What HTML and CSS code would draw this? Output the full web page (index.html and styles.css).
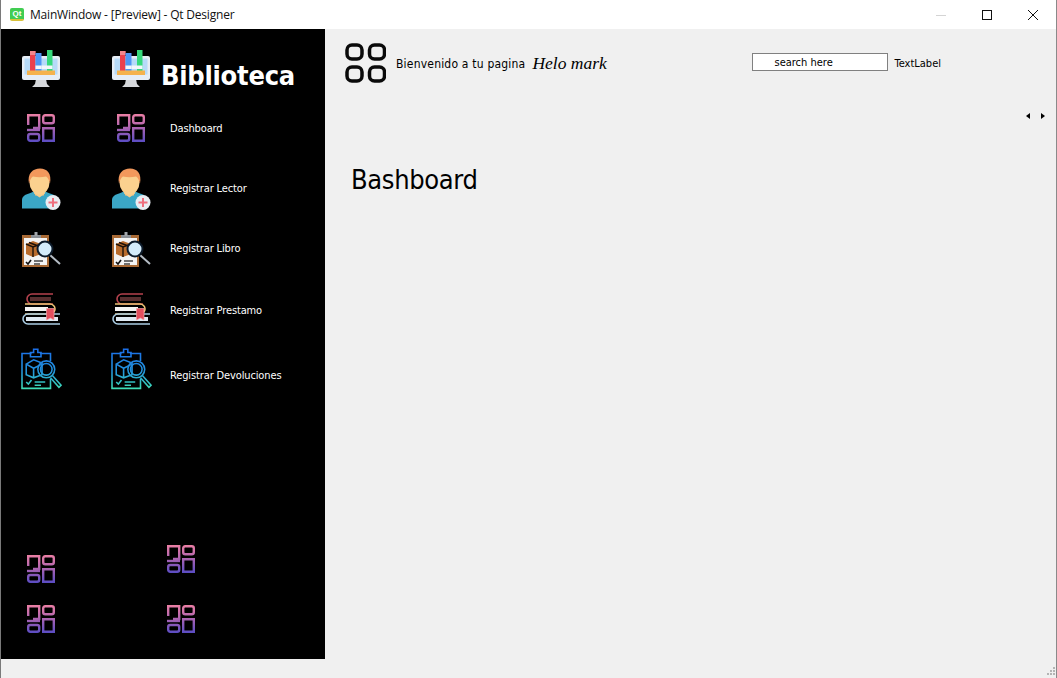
FILE: index.html
```html
<!DOCTYPE html>
<html lang="es">
<head>
<meta charset="utf-8">
<title>MainWindow - [Preview] - Qt Designer</title>
<link rel="stylesheet" href="styles.css">
</head>
<body>
<svg class="defs" aria-hidden="true">
  <defs>
    <linearGradient id="dashGrad" gradientUnits="userSpaceOnUse" x1="0" y1="0" x2="0" y2="28">
      <stop offset="0" stop-color="#ec7fa4"/>
      <stop offset="0.45" stop-color="#b065b0"/>
      <stop offset="1" stop-color="#5a4cc4"/>
    </linearGradient>
    <linearGradient id="tealGrad" gradientUnits="userSpaceOnUse" x1="0" y1="0" x2="0" y2="38">
      <stop offset="0" stop-color="#1b6fe8"/>
      <stop offset="0.55" stop-color="#2394dc"/>
      <stop offset="1" stop-color="#3fe0b4"/>
    </linearGradient>
    <symbol id="i-monitor" viewBox="0 0 38 38">
      <path d="M14 29h10l1 5 3 3H10l3-3z" fill="#d6d8dc"/>
      <rect x="0" y="6" width="38" height="24" rx="2" fill="#e6edf5"/>
      <rect x="2.500" y="8.500" width="33" height="16" fill="#b6daf8"/>
      <rect x="8" y="1" width="5.500" height="20" fill="#ec3f4c"/>
      <rect x="8" y="1" width="5.500" height="4" fill="#f4868c"/>
      <rect x="13.500" y="3" width="6" height="18" fill="#4f97f4"/>
      <rect x="25" y="0" width="5.500" height="21" fill="#35d97c"/>
      <rect x="13.500" y="15.500" width="6" height="3.500" fill="#f4f7fa"/>
      <rect x="19.500" y="15.500" width="5.500" height="3.500" fill="#f4f7fa"/>
      <rect x="25" y="15.500" width="5.500" height="3.500" fill="#f4f7fa"/>
      <rect x="5" y="20.500" width="28" height="4.500" fill="#f5b24c"/>
    </symbol>
    <symbol id="i-dash" viewBox="0 0 28 28">
      <g fill="none" stroke="url(#dashGrad)" stroke-width="2.400">
        <path d="M1.200 11V1.200h11V14H6"/>
        <rect x="16.200" y="1.200" width="10.600" height="8" rx="2"/>
        <path d="M0 16h13"/>
        <rect x="1.200" y="20" width="11" height="6.800" rx="2"/>
        <path d="M16.200 14.200h10.600v12.600H16.200z"/>
      </g>
    </symbol>
    <symbol id="i-person" viewBox="0 -0.500 38 38">
      <path d="M0 39v-8c0-4 3-6 7-7l5-2h11l5 2c4 1 7 3 7 7v8z" fill="#3ba7c6"/>
      <rect x="13" y="17" width="9" height="9" fill="#f0bb78"/>
      <path d="M12 24l5.500 4 5.500-4v-1H12z" fill="#f8cc8c"/>
      <ellipse cx="17.500" cy="13" rx="10" ry="12" fill="#fbd18f"/>
      <path d="M7 14C5 4 11-1 18-1s12 5 10 15c-1-3-2-6-4-7-4 1-9 1-13 0-2 1-3 4-4 7z" fill="#f2985c"/>
      <circle cx="31" cy="33" r="7.500" fill="#e9edf3"/>
      <path d="M31 28.500v9M26.500 33h9" stroke="#ef6f7f" stroke-width="2"/>
    </symbol>
    <symbol id="i-clip" viewBox="0 0 38 38">
      <rect x="0" y="6" width="27" height="32" fill="#a86a35"/>
      <rect x="2" y="9" width="23" height="27" fill="#f4f4f4"/>
      <rect x="9" y="6" width="10" height="3" fill="#8b8f95"/>
      <rect x="12.500" y="3" width="3" height="4" fill="#a2a6ab"/>
      <path d="M4 15l7-3 8 3v10l-8 3-7-3z" fill="#b96c2c"/>
      <path d="M4 15l7 3 8-3M11 18v10M7 13.500l8 3" stroke="#1f1208" stroke-width="1.400" fill="none"/>
      <path d="M4 33l2 2 3-4" stroke="#111" stroke-width="1.600" fill="none"/>
      <path d="M12 32h9M12 35h6" stroke="#444" stroke-width="1.500"/>
      <path d="M28 26l10 9" stroke="#b4bcc4" stroke-width="2"/>
      <circle cx="23" cy="20" r="7.500" fill="#d4ecfa" stroke="#0d1b2a" stroke-width="2"/>
    </symbol>
    <symbol id="i-books" viewBox="0 1 38 38">
      <path d="M31 4H10a5 5 0 0 0 0 10h21" fill="none" stroke="#b5424e" stroke-width="1.600"/>
      <rect x="8" y="7" width="21" height="4" fill="#5a2f30"/>
      <path d="M3 14h25a5 5 0 0 1 0 10H3" fill="none" stroke="#ecc273" stroke-width="1.600"/>
      <rect x="3" y="17" width="23" height="4" fill="#f4f4f4"/>
      <path d="M38 24H6a5 5 0 0 0 0 10h32" fill="none" stroke="#a9cbe2" stroke-width="1.600"/>
      <rect x="4" y="27" width="32" height="4" fill="#dfe9f2"/>
      <path d="M24.500 18.500h7.500v11.500l-3.700-2-3.800 2z" fill="#e24f5e" stroke="#f4a4a8" stroke-width=".7"/>
    </symbol>
    <symbol id="i-clipline" viewBox="1 3.500 36 36">
      <g fill="none" stroke="url(#tealGrad)" stroke-width="1.500">
        <path d="M10 4H1v33h27V28"/>
        <path d="M18 4h10v7"/>
        <path d="M9 7V3h3V0h4v3h3v4z"/>
        <path d="M5 14l7-4 8 3v11l-8 3-7-3zM5 14l7 4 8-4M12 18v9"/>
        <path d="M5 31l2 2 3-4M13 31h10M13 34h6"/>
        <circle cx="24" cy="19" r="8"/>
        <circle cx="24" cy="19" r="5.500"/>
        <path d="M30 25l8 9-2 2-8-9"/>
      </g>
    </symbol>
  </defs>
</svg>

<div class="window">
  <header class="titlebar">
    <span class="qt-logo">Qt</span>
    <span class="win-title">MainWindow - [Preview] - Qt Designer</span>
    <div class="win-controls">
      <svg class="ctl" viewBox="0 0 46 10"><path d="M18 5.500h10" stroke="#d4d4d4"/></svg>
      <svg class="ctl" viewBox="0 0 46 10"><rect x="18.500" y="0.500" width="9" height="9" fill="none" stroke="#111"/></svg>
      <svg class="ctl" viewBox="0 0 46 10"><path d="M18 0l10 10M28 0L18 10" stroke="#111" fill="none"/></svg>
    </div>
  </header>

  <div class="main">
    <aside class="sidebar">
      <div class="nav-row nav-brand">
        <svg class="icon"><use href="#i-monitor"/></svg>
        <svg class="icon second"><use href="#i-monitor"/></svg>
        <span class="brand">Biblioteca</span>
      </div>
      <div class="nav-row">
        <span class="icon dash-box"><svg class="dash"><use href="#i-dash"/></svg></span>
        <span class="icon second dash-box"><svg class="dash"><use href="#i-dash"/></svg></span>
        <span class="label">Dashboard</span>
      </div>
      <div class="nav-row">
        <svg class="icon"><use href="#i-person"/></svg>
        <svg class="icon second"><use href="#i-person"/></svg>
        <span class="label">Registrar Lector</span>
      </div>
      <div class="nav-row">
        <svg class="icon"><use href="#i-clip"/></svg>
        <svg class="icon second"><use href="#i-clip"/></svg>
        <span class="label">Registrar Libro</span>
      </div>
      <div class="nav-row books">
        <svg class="icon"><use href="#i-books"/></svg>
        <svg class="icon second"><use href="#i-books"/></svg>
        <span class="label">Registrar Prestamo</span>
      </div>
      <div class="nav-row">
        <svg class="icon"><use href="#i-clipline"/></svg>
        <svg class="icon second"><use href="#i-clipline"/></svg>
        <span class="label low">Registrar Devoluciones</span>
      </div>
      <div class="bottom-icons">
        <svg class="dash end"><use href="#i-dash"/></svg>
        <svg class="dash start"><use href="#i-dash"/></svg>
        <svg class="dash"><use href="#i-dash"/></svg>
        <svg class="dash"><use href="#i-dash"/></svg>
      </div>
    </aside>

    <section class="content">
      <div class="topbar">
        <svg class="grid-icon" viewBox="0 0 41 40">
          <g fill="none" stroke="#0a0a0a" stroke-width="3.500">
            <rect x="2" y="2" width="15" height="14" rx="5"/>
            <rect x="24.500" y="2" width="15" height="14" rx="5"/>
            <rect x="2" y="24" width="15" height="14" rx="5"/>
            <rect x="24.500" y="24" width="15" height="14" rx="5"/>
          </g>
        </svg>
        <span class="welcome">Bienvenido a tu pagina</span>
        <span class="hello">Helo mark</span>
        <div class="search">search here</div>
        <span class="textlabel">TextLabel</span>
      </div>
      <div class="tab-scroll">
        <span class="arrow left"></span>
        <span class="arrow right"></span>
      </div>
      <h1 class="page-title">Bashboard</h1>
    </section>
  </div>

  <footer class="statusbar">
    <svg class="grip" viewBox="0 0 12 12">
      <g fill="#b4b4b4">
        <rect x="9" y="1" width="2" height="2"/>
        <rect x="6" y="4" width="2" height="2"/>
        <rect x="9" y="4" width="2" height="2"/>
        <rect x="3" y="7" width="2" height="2"/>
        <rect x="6" y="7" width="2" height="2"/>
        <rect x="9" y="7" width="2" height="2"/>
      </g>
    </svg>
  </footer>
</div>
</body>
</html>
```
FILE: styles.css
```css
* { box-sizing: border-box; }
html, body { margin: 0; padding: 0; }
body { background: #f0f0f0; font-family: "DejaVu Sans Condensed", "Liberation Sans", sans-serif; overflow: hidden; }
.defs { position: absolute; width: 0; height: 0; }
symbol { overflow: visible; }
.window { width: 1057px; height: 678px; display: flex; flex-direction: column; background: #f0f0f0; border-left: 1px solid #7a7a7a; border-right: 1px solid #8a8a8a; }

.titlebar { height: 29px; flex: none; background: #fff; display: flex; align-items: center; padding-left: 9px; }
.qt-logo { width: 14px; height: 13px; background: #41cd52; border-bottom: 2px solid #d8c13a; border-radius: 2px; color: #fff; font: 700 8px/11px "Liberation Sans", sans-serif; text-align: center; margin-right: 6px; }
.win-title { font: 12px "Open Sans", "Liberation Sans", sans-serif; color: #111; letter-spacing: -0.2px; }
.win-controls { margin-left: auto; display: flex; }
.ctl { width: 46px; height: 10px; display: block; }

.main { flex: 1; display: flex; min-height: 0; }
.sidebar { width: 324px; flex: none; background: #000; display: flex; flex-direction: column; }
.nav-row { height: 60px; display: flex; align-items: center; padding-left: 21px; flex: none; }
.nav-row.books { height: 64px; }
.nav-brand { height: 69px; padding-top: 11px; }
.icon { width: 38px; height: 38px; flex: none; overflow: visible; display: block; }
.icon.second { margin-left: 52px; margin-right: 20px; }
.dash-box { display: flex; align-items: center; justify-content: center; }
.dash { width: 28px; height: 28px; display: block; overflow: visible; }
.brand { color: #fff; font: 700 27px/36px "DejaVu Sans Condensed", "Noto Sans", sans-serif; margin-left: -9px; margin-top: 14px; letter-spacing: -0.25px; }
.label { color: #fff; font: 11px "DejaVu Sans Condensed", "Liberation Sans", sans-serif; letter-spacing: -0.13px; }
.label.low { margin-top: 6px; }
.bottom-icons { margin-top: auto; display: grid; grid-template-columns: 28px 28px; grid-template-rows: 38px 28px; column-gap: 112px; row-gap: 22px; padding: 0 0 26px 26px; }
.dash.end { align-self: end; }
.dash.start { align-self: start; }

.content { flex: 1; min-width: 0; background: #f0f0f0; display: flex; flex-direction: column; }
.topbar { height: 68px; flex: none; display: flex; align-items: center; padding-left: 20px; }
.grid-icon { width: 41px; height: 40px; flex: none; }
.welcome { font: 12px "DejaVu Sans Condensed", "Liberation Sans", sans-serif; color: #000; margin: 2px 0 0 10px; letter-spacing: 0.2px; }
.hello { font: italic 17.500px "Liberation Serif", serif; color: #000; margin: 0 0 0 7px; }
.search { width: 136px; height: 18px; background: #fff; border: 1px solid #808080; margin: -2px 0 0 auto; font: 11px/17px "DejaVu Sans Condensed", "Liberation Sans", sans-serif; padding-left: 21px; color: #000; }
.textlabel { font: 11px "DejaVu Sans Condensed", "Liberation Sans", sans-serif; color: #000; margin-left: 6px; margin-right: 115px; }
.tab-scroll { display: flex; justify-content: flex-end; gap: 11px; padding: 16px 11px 0 0; flex: none; height: 24px; }
.arrow { width: 0; height: 0; border-top: 3.500px solid transparent; border-bottom: 3.500px solid transparent; }
.arrow.left { border-right: 4px solid #000; }
.arrow.right { border-left: 4px solid #000; }
.page-title { margin: 41px 0 0 26px; font: 400 27px/36px "DejaVu Sans Condensed", "Liberation Sans", sans-serif; color: #000; letter-spacing: -0.35px; }

.statusbar { height: 19px; flex: none; display: flex; justify-content: flex-end; align-items: flex-end; background: #f0f0f0; }
.grip { width: 12px; height: 12px; display: block; }
```
